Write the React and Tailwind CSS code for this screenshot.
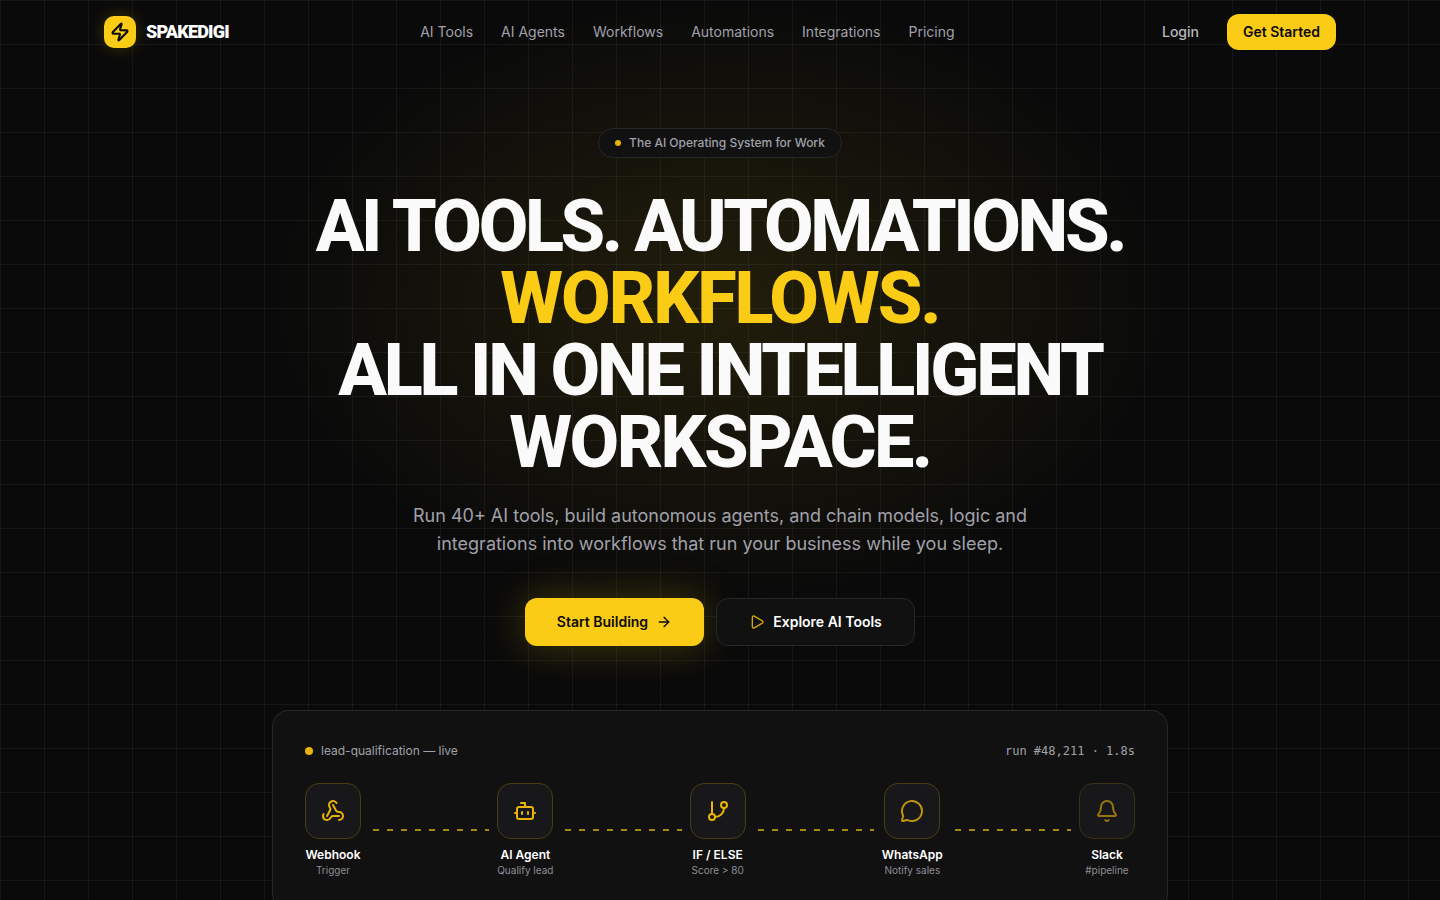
import React from 'react';
import { ArrowRight, Bell, Bot, GitBranch, MessageCircle, Play, Webhook, Zap } from 'lucide-react';

const navLinks = ['AI Tools', 'AI Agents', 'Workflows', 'Automations', 'Integrations', 'Pricing'];

const Node = ({ icon: Icon, title, sub, iconClass = 'opacity-100', borderClass = 'border-[#4a3d12]' }) => (
  <div className="flex flex-col items-center shrink-0">
    <div className={`w-14 h-14 rounded-[14px] bg-[#18181b] border ${borderClass} flex items-center justify-center`}>
      <Icon className={`w-6 h-6 text-[#eab308] ${iconClass}`} strokeWidth={2} />
    </div>
    <div className="mt-2 text-xs leading-4 font-semibold text-white">{title}</div>
    <div className="text-[10px] leading-[15px] text-[#8e8e96]">{sub}</div>
  </div>
);

const Connector = () => (
  <div className="flex-1 ml-3 mr-2 mb-px h-0.5 bg-[repeating-linear-gradient(90deg,#a8870f_0,#a8870f_6px,transparent_6px,transparent_14px)]" />
);

export default function App() {
  return (
    <div className="relative h-[900px] overflow-hidden bg-[#0a0a0a] font-['Inter',sans-serif] bg-[linear-gradient(rgba(255,255,255,0.05)_1px,transparent_1px),linear-gradient(90deg,rgba(255,255,255,0.05)_1px,transparent_1px)] bg-[size:44px_44px]">
      {/* glow */}
      <div className="absolute left-1/2 top-0 -translate-x-1/2 w-[900px] h-[600px] bg-[radial-gradient(closest-side,rgba(250,204,21,0.1),transparent)]" />

      <div className="relative">
        {/* Nav */}
        <header className="max-w-[1280px] mx-auto px-6 h-16 flex items-center justify-between">
          <div className="flex items-center gap-2.5">
            <div className="w-8 h-8 rounded-[10px] bg-[#facc15] flex items-center justify-center shadow-[0_0_16px_rgba(250,204,21,0.2)]">
              <Zap className="w-5 h-5 text-[#0a0a0a]" strokeWidth={2.5} />
            </div>
            <span className="text-lg font-black text-white tracking-[-0.045em] font-['Roboto',sans-serif]">SPAKEDIGI</span>
          </div>
          <nav className="flex items-center gap-7 mr-4">
            {navLinks.map((l) => (
              <a key={l} className="text-sm text-[#a1a1aa]">{l}</a>
            ))}
          </nav>
          <div className="flex items-center gap-7">
            <a className="text-sm text-[#b8b8bd] font-medium">Login</a>
            <button className="h-9 px-4 rounded-xl bg-[#facc15] text-sm font-semibold text-[#0a0a0a]">Get Started</button>
          </div>
        </header>

        {/* Hero */}
        <section className="flex flex-col items-center pt-16 text-center">
          <div className="h-[30px] px-4 rounded-full border border-[#27272a] bg-[#111111] flex items-center gap-2">
            <span className="w-1.5 h-1.5 rounded-full bg-[#eab308]" />
            <span className="text-xs font-medium text-[#a1a1aa]">The AI Operating System for Work</span>
          </div>
          <h1 className="mt-[33px] mb-[-1px] text-[72px] leading-[72px] text-[#fafafa] font-['Roboto',sans-serif] font-extrabold tracking-[-0.047em]">
            AI TOOLS. AUTOMATIONS.
            <br />
            <span className="text-[#facc15] tracking-[-0.028em]">WORKFLOWS.</span>
            <br />
            <span className="tracking-[-0.044em]">ALL IN ONE INTELLIGENT</span>
            <br />
            <span className="tracking-[-0.036em]">WORKSPACE.</span>
          </h1>
          <p className="mt-6 text-lg leading-7 text-[#a1a1aa] max-w-[672px]">
            Run 40+ AI tools, build autonomous agents, and chain models, logic and integrations into workflows that run your business while you sleep.
          </p>
          <div className="mt-10 flex items-center gap-3">
            <button className="h-12 w-[179px] rounded-xl bg-[#facc15] flex items-center justify-center gap-2 text-sm font-semibold text-[#0a0a0a] shadow-[0_0_40px_rgba(250,204,21,0.25)]">
              Start Building
              <ArrowRight className="w-4 h-4" />
            </button>
            <button className="h-12 w-[199px] rounded-xl border border-[#27272a] bg-[#111111] flex items-center justify-center gap-2 text-sm font-semibold text-white">
              <Play className="w-4 h-4 text-[#d4a50c]" />
              Explore AI Tools
            </button>
          </div>

          {/* Workflow card */}
          <div className="mt-16 w-[896px] rounded-2xl border border-[#27272a] bg-[#111111] px-8 pt-8 pb-8 text-left">
            <div className="flex items-center justify-between">
              <div className="flex items-center gap-2">
                <span className="w-2 h-2 rounded-full bg-[#eab308]" />
                <span className="text-xs text-[#a1a1aa]">lead-qualification — live</span>
              </div>
              <span className="text-xs text-[#a1a1aa] font-['DejaVu_Sans_Mono',monospace]">run #48,211 · 1.8s</span>
            </div>
            <div className="mt-6 flex items-center">
              <Node icon={Webhook} title="Webhook" sub="Trigger" />
              <Connector />
              <Node icon={Bot} title="AI Agent" sub="Qualify lead" />
              <Connector />
              <Node icon={GitBranch} title="IF / ELSE" sub="Score > 80" />
              <Connector />
              <Node icon={MessageCircle} title="WhatsApp" sub="Notify sales" iconClass="opacity-80" />
              <Connector />
              <Node icon={Bell} title="Slack" sub="#pipeline" iconClass="opacity-60" borderClass="border-[#3a3214]" />
            </div>
          </div>
        </section>
      </div>
    </div>
  );
}
